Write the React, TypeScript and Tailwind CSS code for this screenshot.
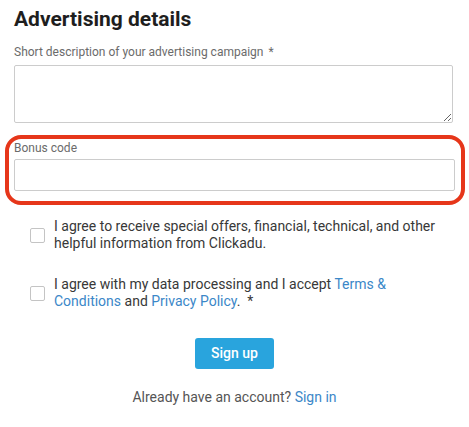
export default function App() {
  return (
    <div className="w-[469px] h-[427px] bg-white px-[14px] pt-[6px] font-['Roboto',sans-serif] text-[#383838]">
      <h1 className="text-[21px] leading-[26px] font-bold text-[#1e1e1e]">Advertising details</h1>

      <div className="mt-[13px]">
        <label className="block text-[12px] leading-[14px] text-[#6b6b6b] mb-[6px]">
          Short description of your advertising campaign <span className="ml-[2px]">*</span>
        </label>
        <textarea className="block w-[439px] h-[58px] border border-[#cccccc] rounded-[2px] bg-white outline-none" />
      </div>

      {/* highlighted field */}
      <div className="mt-[12px] ml-[-9px] mr-[-10px] border-[4px] border-[#e6361a] rounded-[16px] pl-[5px] pr-[6px] pt-[2px] pb-[10px]">
        <label className="block text-[12px] leading-[14px] text-[#6b6b6b] mb-[4px]">Bonus code</label>
        <input type="text" className="block w-full h-[32px] border border-[#cccccc] rounded-[2px] bg-white outline-none" />
      </div>

      <div className="mt-[13px] pl-[16px] flex flex-col gap-[24px] text-[14px] leading-[17px]">
        <div className="flex items-center gap-[9px]">
          <span className="w-[15px] h-[15px] shrink-0 border border-[#c4c4c4] rounded-[2px] bg-white" />
          <p>
            I agree to receive special offers, financial, technical, and other
            <br />
            helpful information from Clickadu.
          </p>
        </div>
        <div className="flex items-center gap-[9px]">
          <span className="w-[15px] h-[15px] shrink-0 border border-[#c4c4c4] rounded-[2px] bg-white" />
          <p>
            I agree with my data processing and I accept <a className="text-[#3b87c8]">Terms &amp;</a>
            <br />
            <a className="text-[#3b87c8]">Conditions</a> and <a className="text-[#3b87c8]">Privacy Policy</a>.&nbsp; *
          </p>
        </div>
      </div>

      <div className="mt-[28px] flex justify-center">
        <button className="w-[79px] h-[31px] rounded-[3px] bg-[#29a4dd] text-white text-[14px] font-medium">
          Sign up
        </button>
      </div>

      <p className="mt-[20px] text-center text-[14px] leading-[17px] text-[#555]">
        Already have an account? <a className="text-[#3b87c8]">Sign in</a>
      </p>
    </div>
  );
}
